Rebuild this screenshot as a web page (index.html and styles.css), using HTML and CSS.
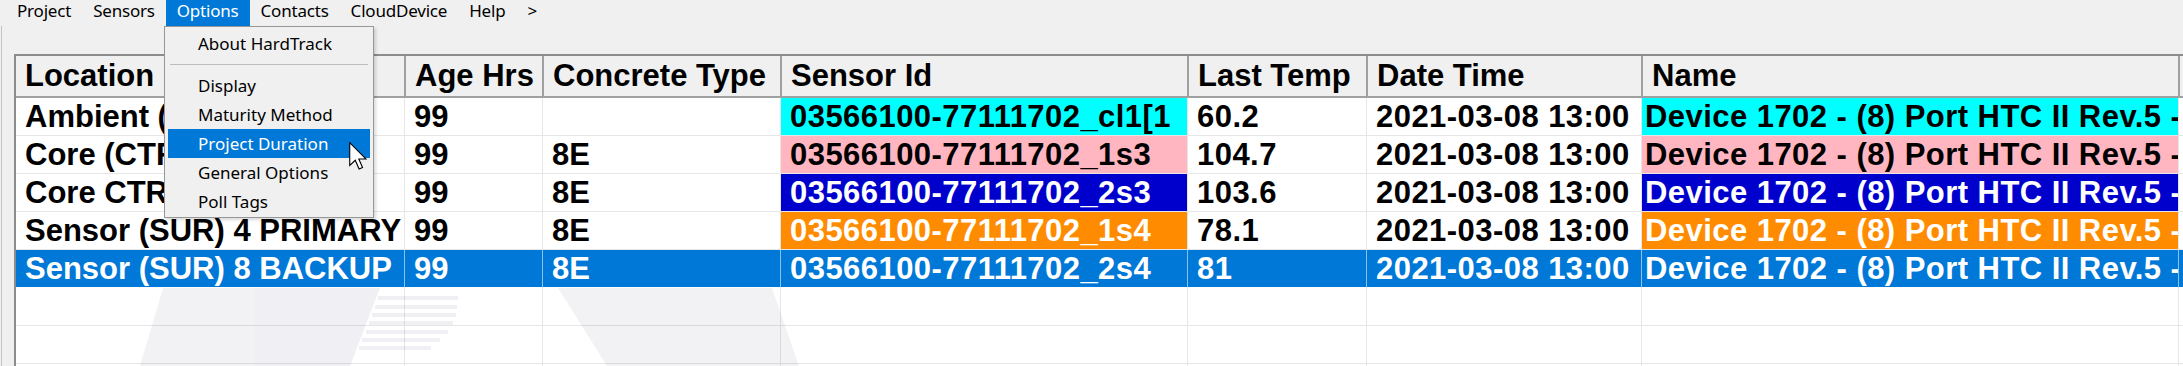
FILE: index.html
```html
<!doctype html>
<html>
<head>
    <meta charset="utf-8">
    <title>HardTrack</title>
    <link rel="stylesheet" href="styles.css">
</head>
<body>

<div class="window">
    <nav class="menubar">
        <span>Project</span>
        <span>Sensors</span>
        <span class="open">Options</span>
        <span>Contacts</span>
        <span>CloudDevice</span>
        <span>Help</span>
        <span>&gt;</span>
    </nav>

    <div class="main">
        <div class="grid">
            <table>
                <colgroup>
                    <col class="c-loc">
                    <col class="c-age">
                    <col class="c-type">
                    <col class="c-sensor">
                    <col class="c-temp">
                    <col class="c-date">
                    <col class="c-name">
                    <col class="c-fill">
                </colgroup>
                <thead>
                    <tr>
                        <th>Location</th>
                        <th>Age Hrs</th>
                        <th>Concrete Type</th>
                        <th>Sensor Id</th>
                        <th>Last Temp</th>
                        <th>Date Time</th>
                        <th>Name</th>
                        <th></th>
                    </tr>
                </thead>
                <tbody>
                    <tr>
                        <td>Ambient (AMB) 1 TOP</td>
                        <td>99</td>
                        <td></td>
                        <td class="wide cyan">03566100-77111702_cl1[1</td>
                        <td class="wide">60.2</td>
                        <td class="wide">2021-03-08 13:00</td>
                        <td class="wide name cyan">Device 1702 - (8) Port HTC II Rev.5 - Main</td>
                        <td></td>
                    </tr>
                    <tr>
                        <td>Core (CTR) 3 PRIMARY</td>
                        <td>99</td>
                        <td>8E</td>
                        <td class="wide pink">03566100-77111702_1s3</td>
                        <td class="wide">104.7</td>
                        <td class="wide">2021-03-08 13:00</td>
                        <td class="wide name pink">Device 1702 - (8) Port HTC II Rev.5 - Main</td>
                        <td></td>
                    </tr>
                    <tr>
                        <td>Core CTR 7 BACKUP</td>
                        <td>99</td>
                        <td>8E</td>
                        <td class="wide blue">03566100-77111702_2s3</td>
                        <td class="wide">103.6</td>
                        <td class="wide">2021-03-08 13:00</td>
                        <td class="wide name blue">Device 1702 - (8) Port HTC II Rev.5 - Main</td>
                        <td></td>
                    </tr>
                    <tr>
                        <td>Sensor (SUR) 4 PRIMARY</td>
                        <td>99</td>
                        <td>8E</td>
                        <td class="wide orange">03566100-77111702_1s4</td>
                        <td class="wide">78.1</td>
                        <td class="wide">2021-03-08 13:00</td>
                        <td class="wide name orange">Device 1702 - (8) Port HTC II Rev.5 - Main</td>
                        <td></td>
                    </tr>
                    <tr class="sel">
                        <td>Sensor (SUR) 8 BACKUP</td>
                        <td>99</td>
                        <td>8E</td>
                        <td class="wide">03566100-77111702_2s4</td>
                        <td class="wide">81</td>
                        <td class="wide">2021-03-08 13:00</td>
                        <td class="wide name">Device 1702 - (8) Port HTC II Rev.5 - Main</td>
                        <td></td>
                    </tr>
                    <tr class="blank"><td></td><td></td><td></td><td></td><td></td><td></td><td></td><td></td></tr>
                    <tr class="blank"><td></td><td></td><td></td><td></td><td></td><td></td><td></td><td></td></tr>
                    <tr class="blank"><td></td><td></td><td></td><td></td><td></td><td></td><td></td><td></td></tr>
                </tbody>
            </table>

            <!-- faint logo behind the empty rows -->
            <svg class="watermark" width="700" height="78" viewBox="0 0 700 78">
                <g fill="#1e1e5a" opacity="0.06">
                    <polygon points="37,0 254,0 224,78 14,78"/>
                    <rect x="252" y="8" width="80" height="4"/>
                    <rect x="249" y="17" width="82" height="4"/>
                    <rect x="246" y="25" width="84" height="4"/>
                    <rect x="243" y="33" width="84" height="4"/>
                    <rect x="240" y="42" width="82" height="4"/>
                    <rect x="236" y="50" width="78" height="4"/>
                    <rect x="233" y="58" width="72" height="4"/>
                    <polygon points="432,0 646,0 673,78 481,78"/>
                </g>
            </svg>
        </div>
    </div>

    <ul class="dropdown">
        <li>About HardTrack</li>
        <li class="sep"></li>
        <li>Display</li>
        <li>Maturity Method</li>
        <li class="active">Project Duration</li>
        <li>General Options</li>
        <li>Poll Tags</li>
    </ul>

    <svg class="cursor" width="18" height="29" viewBox="0 0 13 21">
        <path d="M0.5 0.5 V17 L4.5 13.2 L7.3 19.6 L9.8 18.5 L7.1 12.3 H12.2 Z" fill="#fff" stroke="#000" stroke-width="0.8" stroke-linejoin="miter"/>
    </svg>
</div>

</body>
</html>
```

FILE: styles.css
```css
body {
    margin: 0;
    background-color: #f0f0f0;
    font-family: "Noto Sans", sans-serif;
    color: #000;
}

.window {
    position: relative;
    width: 2183px;
    height: 366px;
    overflow: hidden;
}

/* top menu */
.menubar {
    display: flex;
    height: 26px;
    padding-left: 6px;
    font-size: 17px;
    letter-spacing: -0.2px;
}

.menubar span {
    padding: 0 11px 4px 11px;
    line-height: 22px;
}

.menubar .open {
    background-color: #0078d7;
    color: #fff;
}

.main {
    margin-left: 1px;
    border-left: 1px solid #c4c4c4;
    padding: 28px 0 0 12px;
    height: 312px;
}

/* data grid */
.grid {
    position: relative;
    height: 312px;
    box-sizing: border-box;
    overflow: hidden;
    background: #fff;
    border-top: 2px solid #8c8c8c;
    border-left: 2px solid #8c8c8c;
}

table {
    border-collapse: separate;
    border-spacing: 0;
    table-layout: fixed;
    width: 2212px;
    font: bold 31px "Liberation Sans", Arial, sans-serif;
}

.c-loc { width: 388px; }
.c-age { width: 138px; }
.c-type { width: 238px; }
.c-sensor { width: 407px; }
.c-temp { width: 179px; }
.c-date { width: 275px; }
.c-name { width: 537px; }
.c-fill { width: 50px; }

th {
    background-color: #f0f0f0;
    border-left: 2px solid #a0a0a0;
    border-bottom: 2px solid #a0a0a0;
    padding: 0 0 0 9px;
    line-height: 40px;
    text-align: left;
    font-weight: bold;
    white-space: nowrap;
    overflow: hidden;
}

th:first-child {
    border-left: none;
}

td {
    border-left: 1px solid #e6e6e6;
    border-bottom: 1px solid #e6e6e6;
    padding: 0 0 0 9px;
    line-height: 37px;
    white-space: nowrap;
    overflow: hidden;
}

td:first-child {
    border-left: none;
}

td.wide {
    letter-spacing: 0.45px;
}

td.name {
    padding-left: 3px;
}

tr.blank {
    height: 38px;
}

.cyan { background-color: #00ffff; }
.pink { background-color: #ffb6c1; }
.blue { background-color: #0000cd; color: #fff; }
.orange { background-color: #ff8c00; color: #fff; }

tr.sel td {
    background-color: #0078d7;
    color: #fff;
    border-left-color: #8cc0ee;
    border-bottom-color: #fff;
}

.watermark {
    position: absolute;
    left: 110px;
    top: 232px;
    pointer-events: none;
}

/* open Options menu */
.dropdown {
    position: absolute;
    left: 164px;
    top: 26px;
    width: 202px;
    margin: 0;
    padding: 2px 3px 1px;
    list-style: none;
    background-color: #f0f0f0;
    border: 1px solid #979797;
    box-shadow: 2px 2px 3px rgba(0, 0, 0, 0.15);
    font-size: 17px;
}

.dropdown li {
    height: 29px;
    line-height: 29px;
    padding-left: 30px;
    white-space: nowrap;
}

.dropdown li.sep {
    height: 0;
    margin: 6px 2px 6px 2px;
    padding: 0;
    border-top: 1px solid #bdbdbd;
}

.dropdown li.active {
    background-color: #0078d7;
    color: #fff;
}

.cursor {
    position: absolute;
    left: 349px;
    top: 142px;
}
```
